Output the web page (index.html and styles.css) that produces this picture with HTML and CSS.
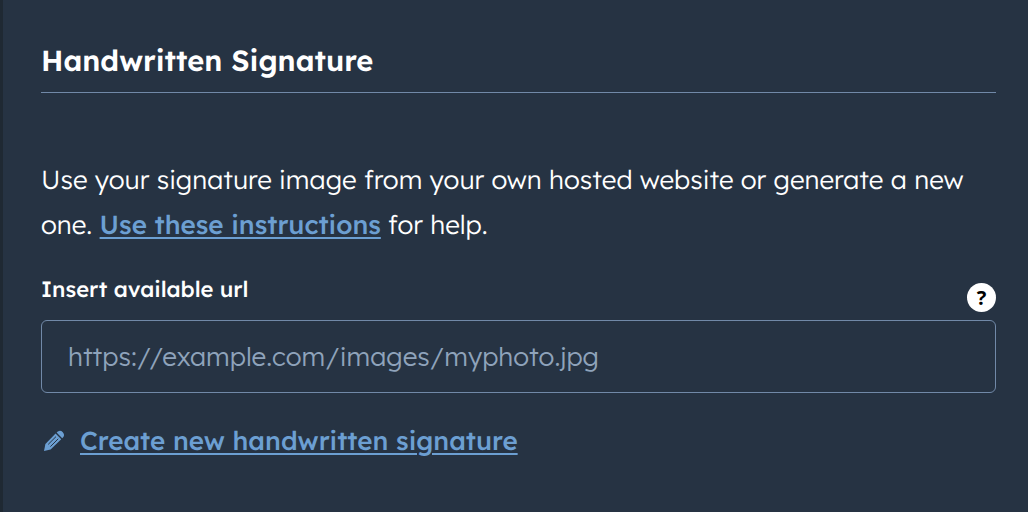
FILE: index.html
```html
<!DOCTYPE html>
<html lang="en">
<head>
    <meta charset="UTF-8">
    <meta name="viewport" content="width=device-width, initial-scale=1.0">
    <title>Handwritten Signature</title>
    <link rel="stylesheet" href="styles.css">
</head>

<body>
    <main class="panel">
        <h2 class="title">Handwritten Signature</h2>

        <p class="intro">Use your signature image from your own hosted website or generate a new one. <a class="link" href="#instructions">Use these instructions</a> for help.</p>

        <div class="field-head">
            <label for="signature-url">Insert available url</label>
            <button class="help" type="button" aria-label="Help">?</button>
        </div>
        <input class="url" id="signature-url" type="url" placeholder="https://example.com/images/myphoto.jpg">

        <div class="create">
            <svg class="pencil" viewBox="0 0 22 22" aria-hidden="true">
                <path class="fill" d="M13.6 2.6 L15 1.4 Q17.4 -0.2 19.8 2.2 Q22 4.6 20.4 7 L19.2 8.2 Z" />
                <path class="fill" d="M12.6 3.6 L18.2 9.2 L7.6 19.4 L1 21 L2.4 14 Z" />
                <path class="groove" d="M13 6.6 L5.2 14.4 M15.2 8.8 L7.4 16.6" />
            </svg>
            <a class="link" href="#create">Create new handwritten signature</a>
        </div>
    </main>
</body>
</html>
```

FILE: styles.css
```css
* {
  margin: 0;
  padding: 0;
  box-sizing: border-box;
}

body {
  min-height: 100vh;
  border-left: 3px solid #1f2933;
  background: #263343;
  color: #fff;
  font-family: Lexend, Inter, sans-serif;
  font-size: 26px;
  font-weight: 300;
  text-rendering: geometricPrecision;
}

.panel {
  padding: 40px 32px 40px 38px;
}

.title {
  padding-bottom: 10px;
  border-bottom: 1px solid #7189a8;
  font-size: 29px;
  font-weight: 600;
  line-height: 42px;
}

.intro {
  margin-top: 64px;
  line-height: 45px;
}

.link {
  color: #6c9fd2;
  font-weight: 500;
  text-decoration: underline;
  text-decoration-thickness: 2px;
  text-underline-offset: 3px;
}

.field-head {
  display: flex;
  justify-content: space-between;
  align-items: flex-end;
  margin-top: 26px;
  padding-bottom: 8px;
}

.field-head label {
  padding-bottom: 7px;
  font-size: 22px;
  font-weight: 500;
  line-height: 32px;
}

.help {
  width: 29px;
  height: 29px;
  border: none;
  border-radius: 50%;
  background: #fff;
  color: #000;
  font-family: "Noto Sans", sans-serif;
  font-size: 20px;
  font-weight: 700;
  line-height: 29px;
  cursor: pointer;
}

.url {
  display: block;
  width: 100%;
  height: 73px;
  padding: 0 26px;
  border: 1px solid #7189a8;
  border-radius: 6px;
  background: transparent;
  color: #fff;
  font: inherit;
}

.url::placeholder {
  color: #8fa3bb;
  opacity: 1;
}

.create {
  display: flex;
  align-items: center;
  gap: 15px;
  margin-top: 28px;
  padding-left: 2px;
  line-height: 40px;
}

.pencil {
  width: 22px;
  height: 22px;
}

.pencil .fill {
  fill: #6c9fd2;
}

.pencil .groove {
  fill: none;
  stroke: #263343;
  stroke-width: 1;
}
```
